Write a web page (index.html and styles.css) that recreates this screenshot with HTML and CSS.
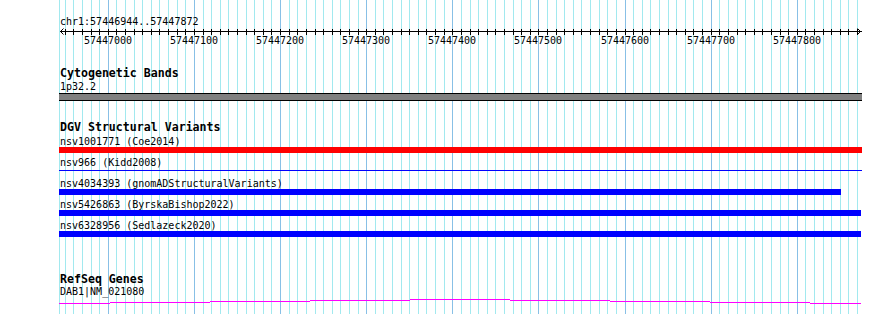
FILE: index.html
```html
<!DOCTYPE html>
<html lang="en">
<head>
    <meta charset="UTF-8">
    <meta name="viewport" content="width=device-width, initial-scale=1.0">
    <title>chr1:57446944..57447872</title>
    <link rel="stylesheet" href="styles.css">
</head>
<body>
    <div class="view">
        <svg class="grid" id="grid" width="890" height="314"></svg>

        <div class="tracks">
            <div class="locus">chr1:57446944..57447872</div>
            <svg class="ruler" id="ruler" width="803" height="20"></svg>

            <!-- Cytogenetic Bands -->
            <div class="track track-bands">
                <div class="track-title">Cytogenetic Bands</div>
                <div class="feature-label">1p32.2</div>
                <div class="band-bar" style="width: 803px"></div>
            </div>

            <!-- DGV -->
            <div class="track track-dgv">
                <div class="track-title">DGV Structural Variants</div>
                <div class="feature">
                    <div class="feature-label">nsv1001771 (Coe2014)</div>
                    <div class="bar bar-loss" style="width: 803px"></div>
                </div>
                <div class="feature">
                    <div class="feature-label">nsv966 (Kidd2008)</div>
                    <div class="bar bar-thin" style="width: 803px"></div>
                </div>
                <div class="feature">
                    <div class="feature-label">nsv4034393 (gnomADStructuralVariants)</div>
                    <div class="bar bar-gain" style="width: 782px"></div>
                </div>
                <div class="feature">
                    <div class="feature-label">nsv5426863 (ByrskaBishop2022)</div>
                    <div class="bar bar-gain" style="width: 802px"></div>
                </div>
                <div class="feature">
                    <div class="feature-label">nsv6328956 (Sedlazeck2020)</div>
                    <div class="bar bar-gain" style="width: 802px"></div>
                </div>
            </div>

            <!-- RefSeq -->
            <div class="track track-genes">
                <div class="track-title">RefSeq Genes</div>
                <div class="feature-label">DAB1|NM_021080</div>
                <svg class="gene" width="803" height="8" shape-rendering="crispEdges">
                    <rect x="0" y="6" width="51" height="1" />
                    <rect x="51" y="5" width="100" height="1" />
                    <rect x="151" y="4" width="100" height="1" />
                    <rect x="251" y="3" width="100" height="1" />
                    <rect x="351" y="2" width="100" height="1" />
                    <rect x="451" y="3" width="100" height="1" />
                    <rect x="551" y="4" width="100" height="1" />
                    <rect x="651" y="5" width="100" height="1" />
                    <rect x="751" y="6" width="51" height="1" />
                </svg>
            </div>
        </div>
    </div>

    <script src="script.js"></script>
</body>
</html>
```

FILE: styles.css
```css
body { margin: 0; background: #fff; color: #000; font-family: "DejaVu Sans Mono", monospace; font-size: 10px; }
.view { position: relative; width: 890px; height: 314px; overflow: hidden; }
.grid { position: absolute; left: 0; top: 0; }
.grid .minor { fill: #a2e9ef; }
.grid .major { fill: #88c0e6; }
.tracks { position: relative; padding-left: 59px; }
.locus { padding: 16px 0 0 1px; line-height: 11px; }
.ruler { display: block; }
.ruler .axis { fill: #000; }
.ruler .arrow { fill: none; stroke: #000; stroke-width: 1; }
.ruler text { font-family: "DejaVu Sans Mono", monospace; font-size: 10px; fill: #000; }
.track { margin-top: 20px; }
.track-title { padding-left: 1px; font-weight: bold; font-size: 11.6px; line-height: 13px; }
.feature-label { padding-left: 1px; line-height: 11px; white-space: nowrap; }
.track-bands .feature-label { margin-top: 1px; }
.band-bar { height: 6px; margin-top: 1px; background: #808080; border-top: 1px solid #000; border-bottom: 1px solid #000; }
.feature { padding-bottom: 4px; }
.track-title + .feature { padding-top: 2px; }
.bar { height: 6px; }
.bar-loss { background: #f00; }
.bar-gain { background: #00f; }
.bar-thin { background: linear-gradient(#00f, #00f) 0 2px / 100% 1px no-repeat; }
.track-genes { margin-top: 32px; }
.gene { display: block; }
.gene rect { fill: #f0f; }
```

FILE: script.js
```js
const NS = 'http://www.w3.org/2000/svg';
const start = 57446944;
const end = 57447872;
const pxPerBp = 0.86125;
const originX = 60.07;   // page x of the first base
const rulerLeft = 59;    // page x of the ruler svg

const toX = bp => originX + (bp - start) * pxPerBp;

const grid = document.getElementById('grid');
const ruler = document.getElementById('ruler');

const rect = (parent, x, y, w, h, cls) => {
    const r = document.createElementNS(NS, 'rect');
    r.setAttribute('x', x);
    r.setAttribute('y', y);
    r.setAttribute('width', w);
    r.setAttribute('height', h);
    if (cls) r.setAttribute('class', cls);
    parent.appendChild(r);
    return r;
};

// left edge of the panel
rect(grid, 59, 0, 1, 314, 'minor');

// axis line
rect(ruler, 1, 4, 802, 1, 'axis');

// arrow heads
const arrows = document.createElementNS(NS, 'path');
arrows.setAttribute('class', 'arrow');
arrows.setAttribute('d', 'M4.5,1.5 L1.5,4.5 L4.5,7.5 M798.5,1.5 L801.5,4.5 L798.5,7.5');
ruler.appendChild(arrows);

for (let bp = Math.ceil(start / 10) * 10; bp <= end; bp += 10) {
    const x = Math.floor(toX(bp));
    const major = bp % 100 === 0;
    rect(grid, x, 0, 1, 314, major ? 'major' : 'minor');
    rect(ruler, x - rulerLeft, 2, 1, 6, 'axis');

    if (major) {
        const t = document.createElementNS(NS, 'text');
        t.setAttribute('x', x - rulerLeft);
        t.setAttribute('y', 17);
        t.setAttribute('text-anchor', 'middle');
        t.textContent = bp;
        ruler.appendChild(t);
    }
}
```
